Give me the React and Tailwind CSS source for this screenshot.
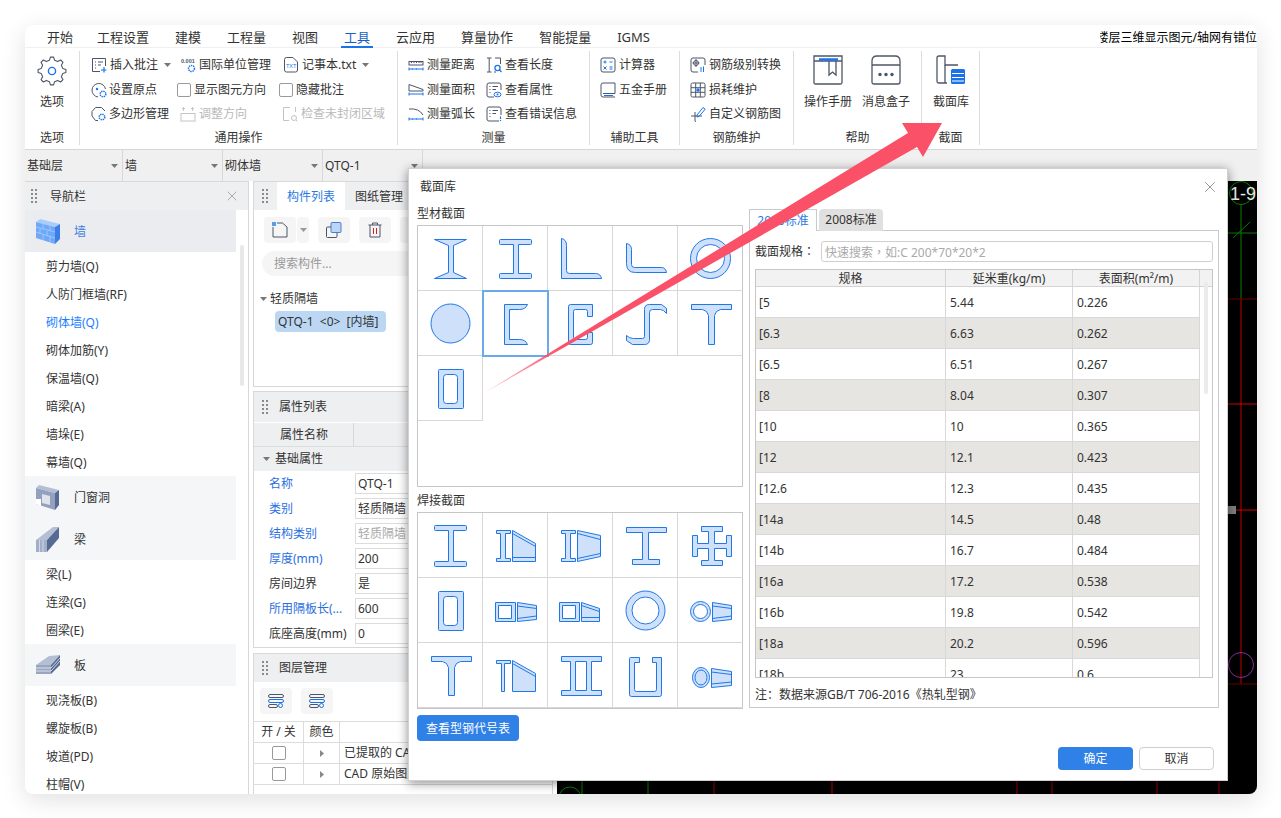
import React from 'react';
import { X } from 'lucide-react';

const GR = '#4d5568';
const BL = '#1a73e8';
const LT = '#c4c4c4';

function Ico({ w = 16, children, className = '' }) {
  return (
    <svg width={w} height={w} viewBox={`0 0 ${w} ${w}`} fill="none" stroke={GR} strokeWidth="1" className={`shrink-0 ${className}`}>
      {children}
    </svg>
  );
}

function Caret({ color = '#777' }) {
  return (
    <svg width="7" height="4" viewBox="0 0 7 4" className="shrink-0"><path d="M0 0H7L3.5 4Z" fill={color} /></svg>
  );
}

function Grip() {
  return (
    <svg width="6" height="14" viewBox="0 0 6 14" className="shrink-0" fill="#8a8a8a">
      <rect x="0" y="0" width="2" height="2" /><rect x="4" y="0" width="2" height="2" />
      <rect x="0" y="4" width="2" height="2" /><rect x="4" y="4" width="2" height="2" />
      <rect x="0" y="8" width="2" height="2" /><rect x="4" y="8" width="2" height="2" />
      <rect x="0" y="12" width="2" height="2" /><rect x="4" y="12" width="2" height="2" />
    </svg>
  );
}

function gearPath(cx, cy, r1, r2, n) {
  const pts = [];
  for (let i = 0; i < n; i++) {
    const a = (i / n) * Math.PI * 2 - Math.PI / 2;
    const s = (Math.PI * 2) / n;
    [[-0.3, r1], [-0.15, r2], [0.15, r2], [0.3, r1]].forEach(([k, r]) => {
      pts.push(`${(cx + Math.cos(a + k * s) * r).toFixed(1)} ${(cy + Math.sin(a + k * s) * r).toFixed(1)}`);
    });
  }
  return 'M' + pts.join('L') + 'Z';
}

const icons = {
  insert: (
    <Ico>
      <path d="M9 14.5H1.5V1.5H14.5V9" /><path d="M4 5H5M7 5H12M4 8H5M7 8H10M4 11H5" />
      <path d="M13 10V15.5M10 13H15.5" stroke={BL} strokeWidth="1.2" />
    </Ico>
  ),
  unit: (
    <Ico>
      <text x="0" y="6" fontSize="5.5" fill={GR} stroke="none" fontFamily="Liberation Sans" fontWeight="bold">0.001</text>
      <circle cx="10.5" cy="11.5" r="3" stroke={BL} strokeDasharray="1.4 .8" strokeWidth="1.5" />
    </Ico>
  ),
  txt: (
    <Ico>
      <path d="M1.5 2.5Q1.5 .5 3.5 .5H10L14.5 5V13Q14.5 15 12.5 15H3.5Q1.5 15 1.5 13Z" />
      <text x="3" y="11" fontSize="5.5" fill={BL} stroke="none" fontFamily="Liberation Sans">TXT</text>
    </Ico>
  ),
  origin: (
    <Ico>
      <path d="M7 15A6.8 6.8 0 1 1 14.5 7" /><circle cx="6" cy="7" r="1.2" fill={BL} stroke="none" />
      <circle cx="12" cy="12" r="2.8" stroke={BL} strokeDasharray="1.4 .8" strokeWidth="1.5" />
    </Ico>
  ),
  poly: (
    <Ico>
      <path d="M7 14.5H4.5L1 10V5.5L4.5 1.5H10.5L14 5" />
      <circle cx="11" cy="11" r="2.8" stroke={BL} strokeDasharray="1.4 .8" strokeWidth="1.5" />
    </Ico>
  ),
  adjust: (
    <Ico>
      <rect x="1" y="7.5" width="14" height="7.5" stroke={LT} /><path d="M3.5 5V1.5M2 3L3.5 1.5L5 3M12.5 5V1.5M11 3L12.5 1.5L14 3" stroke={LT} />
    </Ico>
  ),
  check: (
    <Ico>
      <path d="M8 1.5H1.5V14.5H7M13.5 1V6" stroke={LT} /><circle cx="12" cy="12" r="2.5" stroke={LT} /><path d="M14 14L15.5 15.5" stroke={LT} />
    </Ico>
  ),
  dist: (
    <Ico>
      <rect x="1" y="4.5" width="14" height="3.5" /><path d="M3.5 4.5V6M6 4.5V6M8.5 4.5V6M11 4.5V6M13 4.5V6" />
      <path d="M1 12H15M1 10.5V13.5M15 10.5V13.5M4 12H5M8 12H9" stroke={BL} />
    </Ico>
  ),
  area: (
    <Ico>
      <path d="M1 9V2.5L15 7.5V9Z" /><path d="M1 12H15M1 10.5V13.5M15 10.5V13.5" stroke={BL} />
    </Ico>
  ),
  arc: (
    <Ico>
      <path d="M1 3Q11 2 15 9" /><path d="M1 13H15M1 11.5V14.5M15 11.5V14.5M4 13H5M8 13H9" stroke={BL} />
    </Ico>
  ),
  len: (
    <Ico>
      <path d="M1 1H5.5M3.2 1V15M1 15H5.5M9 1H14.5V7M8 15H10" /><circle cx="11.5" cy="11" r="2.6" stroke={BL} strokeWidth="1.3" /><path d="M13.5 13L15.5 15" stroke={BL} strokeWidth="1.3" />
    </Ico>
  ),
  attr: (
    <Ico>
      <path d="M8 15H3Q1 15 1 13V3Q1 1 3 1H13Q15 1 15 3V8" /><path d="M3.5 4.5H4.5M6.5 4.5H12M3.5 7.5H4.5M6.5 7.5H10M3.5 10.5H4.5" />
      <ellipse cx="11.5" cy="12.5" rx="3.5" ry="2.3" stroke={BL} /><circle cx="11.5" cy="12.5" r="1" fill={BL} stroke="none" />
    </Ico>
  ),
  err: (
    <Ico>
      <path d="M13 15H3Q1 15 1 13V3Q1 1 3 1H13Q15 1 15 3V9" /><path d="M3.5 4.5H4.5M6.5 4.5H12M3.5 7.5H4.5M6.5 7.5H10M3.5 10.5H4.5" />
      <path d="M14.5 10.5V13M14.5 14V15" stroke={BL} strokeWidth="1.2" />
    </Ico>
  ),
  calc: (
    <Ico>
      <rect x="1" y="1" width="14" height="14" rx="2" /><path d="M3.5 5H6.5M5 3.5V6.5M9.5 5H12.5M3.5 9.5L6.5 12.5M6.5 9.5L3.5 12.5M9.5 10H12.5M9.5 12H12.5" stroke={BL} />
    </Ico>
  ),
  book: (
    <Ico>
      <path d="M3 11.5H15V1H3Q1 1 1 3V13Q1 15 3 15H15" /><path d="M4 13.5H13" stroke={BL} />
    </Ico>
  ),
  grade: (
    <Ico>
      <path d="M8 15H3Q1 15 1 13V3Q1 1 3 1H13Q15 1 15 3V8" /><circle cx="6" cy="6" r="2.5" /><path d="M6 2V10M2.5 6H9.5" />
      <path d="M11 10V15M13.5 15V9.5" stroke={BL} />
    </Ico>
  ),
  loss: (
    <Ico>
      <rect x="1" y="1" width="14" height="14" rx="1.5" /><path d="M5.7 1V15M10.3 1V15M1 5.7H15M1 10.3H15" />
      <circle cx="8" cy="8" r="1.7" fill={BL} stroke="none" />
    </Ico>
  ),
  rebar: (
    <Ico>
      <path d="M1 10H12M5 6V15Q5 15.5 6 15.5" /><path d="M7 9L13 1.5L15.2 3.2L9 10.5L7 11Z" stroke={BL} />
    </Ico>
  ),
};

const ribbonText = 'text-xs leading-[16px] text-[#333] whitespace-nowrap';

function Tool({ icon, label, caret, disabled, pl = 0, gap = 3 }) {
  return (
    <div className="flex items-center" style={{ paddingLeft: pl, gap }}>
      {icons[icon]}
      <span className={`${ribbonText} ${disabled ? 'text-[#b9b9b9]' : ''}`}>{label}</span>
      {caret && <span className="ml-[3px]"><Caret /></span>}
    </div>
  );
}

function Chk({ label }) {
  return (
    <div className="flex items-center gap-[3px]">
      <span className="w-[14px] h-[14px] rounded-[2px] border border-[#9a9a9a] bg-white" />
      <span className={ribbonText}>{label}</span>
    </div>
  );
}

function Group({ w, label, children, pl = 0 }) {
  return (
    <div className="flex flex-col shrink-0 relative border-r border-[#dcdcdc] h-[94px] mt-[3px]" style={{ width: w }}>
      <div className="flex-1" style={{ paddingLeft: pl }}>{children}</div>
      <div className="text-xs h-[16px] leading-[20px] text-[#333] text-center mb-[1px]">{label}</div>
    </div>
  );
}

const Rows = ({ children, cols }) => (
  <div className="grid grid-rows-[24.5px_24.5px_24.5px] items-center mt-[2px]" style={{ gridTemplateColumns: cols }}>{children}</div>
);

function BigTool({ label, children }) {
  return (
    <div className="flex flex-col items-center w-[48px]">
      <div className="h-[32px] mt-[3px] flex items-center justify-center">{children}</div>
      <div className={`${ribbonText} mt-[8px]`}>{label}</div>
    </div>
  );
}

function Ribbon() {
  return (
    <div className="flex h-[102px] border-b border-[#d6d6d6] bg-white shrink-0">
      <Group w={55} label="选项">
        <div className="flex flex-col items-center pt-[5px]">
          <svg width="30" height="30" viewBox="0 0 30 30" fill="none">
            <path d={gearPath(15, 15, 11, 14, 8)} stroke={GR} strokeWidth="1.1" strokeLinejoin="round" />
            <circle cx="15" cy="15" r="3.6" stroke={BL} strokeWidth="1.4" />
          </svg>
          <div className={`${ribbonText} mt-[8px]`}>选项</div>
        </div>
      </Group>
      <Group w={318} label="通用操作" pl={11}>
        <Rows cols="86px 102px 1fr">
          <Tool icon="insert" label="插入批注" caret />
          <Tool icon="unit" label="国际单位管理" pl={4} gap={2} />
          <Tool icon="txt" label="记事本.txt" caret pl={4} />
          <Tool icon="origin" label="设置原点" gap={2} />
          <Chk label="显示图元方向" />
          <Chk label="隐藏批注" />
          <Tool icon="poly" label="多边形管理" gap={2} />
          <Tool icon="adjust" label="调整方向" disabled pl={3} />
          <Tool icon="check" label="检查未封闭区域" disabled pl={3} />
        </Rows>
      </Group>
      <Group w={192} label="测量" pl={10}>
        <Rows cols="78px 1fr">
          <Tool icon="dist" label="测量距离" />
          <Tool icon="len" label="查看长度" />
          <Tool icon="area" label="测量面积" />
          <Tool icon="attr" label="查看属性" />
          <Tool icon="arc" label="测量弧长" />
          <Tool icon="err" label="查看错误信息" />
        </Rows>
      </Group>
      <Group w={90} label="辅助工具" pl={10}>
        <Rows cols="1fr">
          <Tool icon="calc" label="计算器" />
          <Tool icon="book" label="五金手册" />
        </Rows>
      </Group>
      <Group w={114} label="钢筋维护" pl={10}>
        <Rows cols="1fr">
          <Tool icon="grade" label="钢筋级别转换" />
          <Tool icon="loss" label="损耗维护" />
          <Tool icon="rebar" label="自定义钢筋图" />
        </Rows>
      </Group>
      <Group w={128} label="帮助" pl={10}>
        <div className="flex gap-[10px]">
          <BigTool label="操作手册">
            <svg width="30" height="30" viewBox="0 0 30 30" fill="none" stroke={GR} strokeWidth="1.3">
              <path d="M1 1H29V27.5Q29 29 27.5 29H2.5Q1 29 1 27.5Z M1 6H29" />
              <path d="M6 4.5H25" stroke={BL} strokeWidth="2.4" />
              <path d="M16 6V20L19.5 17L23 20V6" />
            </svg>
          </BigTool>
          <BigTool label="消息盒子">
            <svg width="30" height="30" viewBox="0 0 30 30" fill="none" stroke={GR} strokeWidth="1.3">
              <path d="M1 6Q1 1 6 1H24Q29 1 29 6V27Q29 29 27 29H3Q1 29 1 27Z M1 10H29" />
              <circle cx="9" cy="19.5" r="1.7" fill={GR} stroke="none" /><circle cx="15" cy="19.5" r="1.7" fill={GR} stroke="none" /><circle cx="21" cy="19.5" r="1.7" fill={GR} stroke="none" />
            </svg>
          </BigTool>
        </div>
      </Group>
      <Group w={58} label="截面" pl={5}>
        <BigTool label="截面库">
          <svg width="30" height="30" viewBox="0 0 30 30" fill="none" stroke={GR} strokeWidth="1.3">
            <path d="M11 28H3Q1 28 1 26V3Q1 1 3 1H9V10H22" /><path d="M9 10V28" />
            <rect x="15" y="14" width="14" height="15" rx="1.5" fill={BL} stroke="none" />
            <path d="M16 18.5H28M16 22.5H28M16 26H28" stroke="#fff" strokeWidth="1.2" />
          </svg>
        </BigTool>
      </Group>
    </div>
  );
}

function NavIcon({ kind }) {
  if (kind === 'wall') {
    return (
      <svg width="24" height="25" viewBox="0 0 24 25">
        <path d="M0 3L4 0L24 5L19 8Z" fill="#a9cdfb" />
        <path d="M0 3L19 8V25L0 19Z" fill="#6fa8f8" />
        <path d="M19 8L24 5V20L19 25Z" fill="#3c7de6" />
        <path d="M0 8L19 13M0 13L19 19M7 5V10M14 7V12M4 10V15M11 12V17M7 15V21M14 17V23" stroke="#a9cdfb" strokeWidth=".8" fill="none" />
      </svg>
    );
  }
  if (kind === 'door') {
    return (
      <svg width="24" height="25" viewBox="0 0 24 25">
        <path d="M0 3L3 0L23 5L19 8Z" fill="#b5bfd4" />
        <path d="M0 3L19 8V25L0 19Z" fill="#93a1bf" />
        <path d="M19 8L23 5V20L19 25Z" fill="#566a93" />
        <path d="M6 9L14 11V20L6 18Z" fill="#dfe3ea" />
        <path d="M0 14H5V21L0 19Z" fill="#fff" />
      </svg>
    );
  }
  if (kind === 'beam') {
    return (
      <svg width="24" height="25" viewBox="0 0 24 25">
        <path d="M0 13L17 0H23L11 13Z" fill="#b5bfd4" />
        <path d="M0 13H11V25H0Z" fill="#a3afc9" />
        <path d="M11 13L23 0V11L11 25Z" fill="#566a93" />
        <path d="M3.5 13V25M7 13V25" stroke="#dfe3ea" strokeWidth=".8" />
      </svg>
    );
  }
  return (
    <svg width="24" height="22" viewBox="0 0 24 22">
      <path d="M0 11L13 2L24 1L15 11Z" fill="#b5bfd4" />
      <path d="M0 11H15V20H0Z" fill="#98a6c2" />
      <path d="M15 11L24 1V11L15 20Z" fill="#566a93" />
      <path d="M0 14H15M0 17H15M15 14L24 4M15 17L24 7" stroke="#eef0f4" strokeWidth=".8" />
    </svg>
  );
}

const navData = [
  ['wall', '墙', ['剪力墙(Q)', '人防门框墙(RF)', '砌体墙(Q)', '砌体加筋(Y)', '保温墙(Q)', '暗梁(A)', '墙垛(E)', '幕墙(Q)'], true],
  ['door', '门窗洞', []],
  ['beam', '梁', ['梁(L)', '连梁(G)', '圈梁(E)']],
  ['slab', '板', ['现浇板(B)', '螺旋板(B)', '坡道(PD)', '柱帽(V)']],
];

function Nav() {
  return (
    <div className="w-[224px] shrink-0 border-r border-[#d8d8d8] border-t flex flex-col relative overflow-hidden">
      <div className="h-[28px] bg-[#eeeff1] flex items-center pl-[6px] pr-[8px] shrink-0">
        <Grip />
        <span className="text-xs text-[#333] ml-[13px] flex-1 pt-[2px]">导航栏</span>
        <X size={16} strokeWidth={1} color="#888" />
      </div>
      <div className="w-[211px]">
        {navData.map(([kind, name, items, active]) => (
          <div key={kind}>
            <div className={`h-[42px] flex items-center pl-[11px] ${active ? 'bg-[#ebecf0]' : 'bg-[#f5f6f8]'}`}>
              <div className="w-[24px] flex justify-center"><NavIcon kind={kind} /></div>
              <span className={`text-xs ml-[14px] pt-[1px] ${active ? 'text-[#3f7fe0]' : 'text-[#333]'}`}>{name}</span>
            </div>
            {items.map((it) => (
              <div key={it} className={`h-[28px] leading-[30px] pl-[21px] text-xs ${it === '砌体墙(Q)' ? 'text-[#1a7fff]' : 'text-[#333]'}`}>{it}</div>
            ))}
          </div>
        ))}
      </div>
      {/* 捲軸 */}
      <div className="absolute left-[215px] top-[63px] w-[4px] h-[141px] rounded bg-[#e8e8e8]" />
    </div>
  );
}

const ToolBtn = ({ children, w = 32 }) => (
  <div className="h-[26px] bg-[#f5f5f5] rounded flex items-center justify-center shrink-0" style={{ width: w }}>{children}</div>
);

const props = [
  ['名称', 'QTQ-1', 1],
  ['类别', '轻质隔墙', 1],
  ['结构类别', '轻质隔墙', 1, 1],
  ['厚度(mm)', '200', 1],
  ['房间边界', '是', 0],
  ['所用隔板长(...', '600', 1],
  ['底座高度(mm)', '0', 0],
];

const layerIcon = (
  <svg width="16" height="14" viewBox="0 0 16 14" fill="none" stroke={GR} strokeWidth="1">
    <rect x=".5" y=".5" width="15" height="3" rx="1.5" /><rect x=".5" y="5.5" width="15" height="3" rx="1.5" stroke={BL} /><rect x=".5" y="10.5" width="9" height="3" rx="1.5" />
    <circle cx="12.5" cy="11.5" r="2" stroke={BL} />
  </svg>
);

function Panels() {
  return (
    <div className="w-[300px] ml-[4px] shrink-0 flex flex-col gap-[4px] text-xs text-[#333]">
      <div className="h-[206px] border border-[#d8d8d8] shrink-0">
        <div className="h-[28px] bg-[#eeeff1] flex items-stretch">
          <div className="w-[23px] flex items-center pl-[8px]"><Grip /></div>
          <div className="w-[68px] bg-white text-[#2a7ae2] flex items-center justify-center pt-[1px]">构件列表</div>
          <div className="w-[68px] flex items-center justify-center pt-[1px]">图纸管理</div>
        </div>
        <div className="flex gap-[9px] pl-[10px] pt-[7px]">
          <div className="flex gap-px">
            <ToolBtn>
              <svg width="16" height="16" viewBox="0 0 16 16" fill="none" stroke={GR}>
                <path d="M5 1H10.5L15 5V15H1V5" /><rect x="0" y="0" width="4" height="4" fill="#5a9bf0" stroke="none" />
              </svg>
            </ToolBtn>
            <ToolBtn w={12}><Caret color="#999" /></ToolBtn>
          </div>
          <ToolBtn>
            <svg width="16" height="16" viewBox="0 0 16 16" fill="none" stroke={GR}>
              <rect x="5" y=".5" width="10" height="10" rx="1" fill="#bcd5f5" stroke="#4a7fcf" /><path d="M5 5H1.5Q.5 5 .5 6V14.5Q.5 15.5 1.5 15.5H10Q11 15.5 11 14.5V11" />
            </svg>
          </ToolBtn>
          <ToolBtn>
            <svg width="14" height="16" viewBox="0 0 14 16" fill="none" stroke={GR}>
              <path d="M.5 3H13.5M4.5 3V1H9.5V3M2 3V15H12V3" /><path d="M5.5 6V12M8.5 6V12" stroke="#d02020" />
            </svg>
          </ToolBtn>
          <ToolBtn />
        </div>
        <div className="h-[25px] mt-[8px] ml-[8px] w-[280px] rounded-full bg-[#f5f5f5] leading-[25px] pl-[12px] text-[#999]">搜索构件...</div>
        <div className="flex items-center h-[16px] mt-[15px] pl-[6px] gap-[3px]">
          <Caret />
          <span>轻质隔墙</span>
        </div>
        <div className="ml-[21px] mt-[4px] w-[111px] h-[21px] rounded bg-[#bcd7f3] leading-[21px] pl-[3px] whitespace-pre">QTQ-1  &lt;0&gt;  [内墙]</div>
      </div>

      <div className="h-[257px] border border-[#d8d8d8] shrink-0">
        <div className="h-[30px] bg-[#eeeff1] flex items-center pl-[8px]">
          <Grip /><span className="ml-[11px]">属性列表</span>
        </div>
        <div className="h-[24px] bg-[#eeeff1] mt-px flex items-center border-b border-[#dcdcdc]">
          <div className="w-[100px] h-full border-r border-[#d8d8d8] leading-[24px] pl-[26px]">属性名称</div>
        </div>
        <div className="h-[24px] bg-[#eeeff1] flex items-center pl-[9px] gap-[5px]"><Caret /><span>基础属性</span></div>
        {props.map(([k, v, blue, dis]) => (
          <div key={k} className="h-[25px] flex items-center">
            <div className={`w-[101px] pl-[15px] whitespace-nowrap ${blue ? 'text-[#2a6fe0]' : ''}`}>{k}</div>
            <div className={`flex-1 h-[21px] border border-[#dcdcdc] leading-[19px] pl-[2px] ${dis ? 'text-[#aaa]' : ''}`}>{v}</div>
          </div>
        ))}
      </div>

      <div className="flex-1 border border-[#d8d8d8] border-b-0 mt-px">
        <div className="h-[28px] bg-[#eeeff1] flex items-center pl-[8px]">
          <Grip /><span className="ml-[11px]">图层管理</span>
        </div>
        <div className="flex gap-[9px] pl-[6px] pt-[6px] pb-[7px]">
          <ToolBtn>{layerIcon}</ToolBtn>
          <ToolBtn>{layerIcon}</ToolBtn>
        </div>
        {[['开 / 关', '颜色', ''], [0, 1, '已提取的 CAD 图层'], [0, 1, 'CAD 原始图层']].map((r, i) => (
          <div key={i} className="h-[21px] flex border-t border-[#dcdcdc] leading-[20px]">
            <div className="w-[50px] border-r border-[#dcdcdc] flex items-center justify-center">
              {i === 0 ? r[0] : <span className="w-[14px] h-[14px] rounded-[2px] border border-[#999]" />}
            </div>
            <div className="w-[36px] border-r border-[#dcdcdc] flex items-center justify-center">
              {i === 0 ? r[1] : <svg width="4" height="7" viewBox="0 0 4 7"><path d="M0 0L4 3.5L0 7Z" fill="#888" /></svg>}
            </div>
            <div className="flex-1 pl-[4px] whitespace-nowrap">{r[2]}</div>
          </div>
        ))}
        <div className="border-t border-[#dcdcdc]" />
      </div>
    </div>
  );
}

function Canvas() {
  const dark = '#6a0000';
  const red = '#c00000';
  return (
    <div className="flex-1 ml-[4px] bg-black">
      <svg width="700" height="613" viewBox="0 0 700 613" className="block">
        <g transform="translate(-557 -181)" fill="none">
          <circle cx="1241" cy="193" r="11.5" stroke="#0a7a0a" />
          <text x="1230" y="200" fontSize="18" fill="#e8e8e8" stroke="none" fontFamily="Liberation Sans">1-9</text>
          <path d="M1241 204V299M1228 233H1257M1233 238L1250 222" stroke="#0a7a0a" />
          <path d="M1241 299V684" stroke={red} />
          <path d="M1228 299H1257M1228 684H1257" stroke={dark} />
          <path d="M1228 404H1257M1228 510H1257" stroke="#d80000" />
          <rect x="1228" y="506" width="8" height="8" fill="#808080" />
          <circle cx="1241" cy="665" r="12.5" stroke="#8a2f9e" />
          <path d="M582 781V794M648 781V794" stroke="#0a7a0a" />
          <path d="M714 781V794M1017 781V794M1052 781V794M1157 781V794M1219 781V794" stroke="#9a0000" />
          <path d="M832 781V794" stroke={red} />
          <circle cx="570" cy="798" r="11" stroke="#0a7a0a" />
        </g>
      </svg>
    </div>
  );
}

const sFill = { fill: '#cfe1fa', stroke: '#1f78e8', strokeWidth: 1, strokeLinejoin: 'round', fillRule: 'evenodd' };
const P = ({ d }) => <path d={d} {...sFill} />;
const L = ({ d }) => <path d={d} fill="none" stroke="#1f78e8" strokeWidth="1" />;
const tube = 'M21 13H44Q45 13 45 14V51Q45 52 44 52H21Q20 52 20 51V14Q20 13 21 13ZM28 18Q25 18 25 21V44Q25 47 28 47H36Q39 47 39 44V21Q39 18 36 18Z';
const ibeam = 'M17 13H47Q48 13 48 14V17Q48 18 47 18H35V47H47Q48 47 48 48V51Q48 52 47 52H17Q16 52 16 51V48Q16 47 17 47H30V18H17Q16 18 16 17V14Q16 13 17 13Z';
const smallI = 'M13 17H27V20H22V45H27V48H13V45H17V20H13Z';
const trapA = (
  <>
    <P d="M29 17L52 30V48H29Z" /><L d="M29 20L52 33" />
  </>
);
const ring = (cx, cy, R, r) => `M${cx - R} ${cy}A${R} ${R} 0 1 1 ${cx + R} ${cy}A${R} ${R} 0 1 1 ${cx - R} ${cy}ZM${cx - r} ${cy}A${r} ${r} 0 1 0 ${cx + r} ${cy}A${r} ${r} 0 1 0 ${cx - r} ${cy}Z`;
const trapB = (x) => (
  <>
    <P d={`M${x} 24L${x + 19} 27V41L${x} 43Z`} /><L d={`M${x} 27.5L${x + 19} 30M${x} 40L${x + 19} 37.5`} />
  </>
);

const profileShapes = [
  <P d="M16 13H48L35 19V46L48 52H16L30 46V19Z" />,
  <P d={ibeam} />,
  <P d="M13 12Q18 13 18 19V44Q18 47 21 47H47Q52 47 53 52H13Z" />,
  <P d="M13 17Q18 18 18 23V38Q18 41 21 41H48Q52 41 53 46H22Q13 46 13 37Z" />,
  <P d={ring(32, 32, 20, 14)} />,
  <circle cx="32" cy="32" r="19.5" {...sFill} />,
  <P d="M21 13H44Q42 18 36 18H26V48H36Q42 48 44 53H21Z" />,
  <P d="M22 13H44V25H39V20Q39 18 37 18H27Q25 18 25 20V46Q25 48 27 48H37Q39 48 39 46V41H44V51Q44 53 42 53H22Q20 53 20 51V15Q20 13 22 13Z" />,
  <P d="M31 18Q31 13 36 13H48L53 17V22Q50 18 47 18H39Q36 18 36 21V48Q36 53 31 53H19L13 49V44Q16 47 20 47H29Q31 47 31 45Z" />,
  <P d="M13 13H53V18H42Q37 19 36 24V53H30V24Q29 19 24 18H13Z" />,
  <P d={tube} />,
];

const weldShapes = [
  <P d="M17 12H47Q48 12 48 13V16Q48 17 47 17H35V48H47Q48 48 48 49V52Q48 53 47 53H17Q16 53 16 52V49Q16 48 17 48H30V17H17Q16 17 16 16V13Q16 12 17 12Z" />,
  <>
    <P d={smallI} />{trapA}<L d="M29 44H52" />
  </>,
  <>
    <P d={smallI} /><P d="M29 17L52 22V43L29 48Z" /><L d="M29 20L52 26M29 45L52 40" />
  </>,
  <P d="M13 14H53V19H35V46H46V51H19V46H29V19H13Z" />,
  <P d="M23 13H44V18H36V30H48V22H53V43H48V35H36V47H44V52H23V47H30V35H19V43H14V22H19V30H30V18H23Z" />,
  <P d={tube} />,
  <>
    <P d="M12 24H32V43H12ZM15 27V40H28V27Z" />{trapB(34)}
  </>,
  <>
    <P d="M11 24H31V43H11ZM14 27V40H27V27Z" /><P d="M33 24L51 30V43H33Z" /><L d="M33 27L51 33M33 39H51" />
  </>,
  <P d={ring(32, 32, 19.5, 13.5)} />,
  <>
    <P d={ring(22, 33, 10, 7)} />{trapB(34)}
  </>,
  <P d="M13 13H53V18H42Q37 19 36 24V52H30V24Q29 19 24 18H13Z" />,
  <>
    <P d="M13 17H27V20H21V48H18V20H13Z" />{trapA}
  </>,
  <P d="M13 13H53V18H43V47H53V52H13V47H22V18H13ZM27 18V47H38V18Z" />,
  <P d="M17 14H26V19H21V46Q21 48 23 48H41Q43 48 43 46V19H39V14H48V51Q48 53 46 53H18Q16 53 16 51V15Q16 14 17 14Z" />,
  <>
    <ellipse cx="22.5" cy="34" rx="8.5" ry="10" {...sFill} /><ellipse cx="22.5" cy="34" rx="6" ry="7.5" {...sFill} />
    <P d="M33 25L53 28V42L33 44Z" /><L d="M33 28.5L53 31M33 40.5L53 38.5" />
  </>,
];

function ShapeGrid({ shapes, selected, h }) {
  return (
    <div className="w-[326px] border border-[#c6c6c6] grid grid-cols-[repeat(5,65px)] auto-rows-[65px] content-start" style={{ height: h }}>
      {shapes.map((s, i) => (
        <div key={i} className={`relative ${selected === i ? 'outline-2 -outline-offset-1 outline-[#6aa9ec] z-[1]' : ''} ${(i + 1) % 5 === 0 ? 'border-b' : 'border-r border-b'} border-[#d8d8d8]`}>
          <svg width="65" height="65" viewBox="0 0 65 65" className="block"><g transform="translate(.5 .5)">{s}</g></svg>
        </div>
      ))}
    </div>
  );
}

const specRows = [
  ['[5', '5.44', '0.226'], ['[6.3', '6.63', '0.262'], ['[6.5', '6.51', '0.267'], ['[8', '8.04', '0.307'],
  ['[10', '10', '0.365'], ['[12', '12.1', '0.423'], ['[12.6', '12.3', '0.435'], ['[14a', '14.5', '0.48'],
  ['[14b', '16.7', '0.484'], ['[16a', '17.2', '0.538'], ['[16b', '19.8', '0.542'], ['[18a', '20.2', '0.596'], ['[18b', '23', '0.6'],
];

function SpecTable() {
  return (
    <div className="relative mt-[7px] w-[458px] h-[409px] border border-[#c6c6c6] overflow-hidden">
      <div className="flex h-[17px] bg-[#f2f2f2] border-b border-[#d4d4d4] leading-[17px] text-center">
        <div className="w-[190px] border-r border-[#d4d4d4]">规格</div>
        <div className="w-[127px] border-r border-[#d4d4d4]">延米重(kg/m)</div>
        <div className="w-[127px] border-r border-[#d4d4d4]">表面积(m²/m)</div>
      </div>
      {specRows.map((r, i) => (
        <div key={r[0]} className="flex h-[31px] leading-[31px]">
          <div className={`w-[444px] flex border-b border-[#d8d8d8] border-r ${i % 2 ? 'bg-[#e6e5e1]' : 'bg-white'}`}>
            <div className="w-[190px] border-r border-[#d8d8d8] pl-[3px]">{r[0]}</div>
            <div className="w-[127px] border-r border-[#d8d8d8] pl-[4px]">{r[1]}</div>
            <div className="pl-[4px]">{r[2]}</div>
          </div>
        </div>
      ))}
      <div className="absolute left-[448px] top-[12px] w-[4px] h-[112px] rounded bg-[#ebebeb]" />
    </div>
  );
}

const tcPunct = "font-['Noto_Sans_CJK_TC']";

function Dialog() {
  return (
    <div className="absolute left-[383px] top-[143px] w-[820px] h-[613px] bg-white border border-[#d0d0d0] shadow-[0_2px_10px_rgba(0,0,0,0.45)] z-10 flex flex-col text-xs text-[#333]">
      <div className="h-[36px] shrink-0 flex items-center justify-between pl-[11px] pr-[8px]">
        <span>截面库</span>
        <X size={18} strokeWidth={1} color="#777" />
      </div>
      <div className="flex pl-[8px] gap-[6px]">
        <div className="w-[326px] shrink-0">
          <div className="h-[16px] leading-[18px] mb-[4px]">型材截面</div>
          <ShapeGrid shapes={profileShapes} selected={6} h={262} />
          <div className="h-[16px] leading-[18px] mt-[5px] mb-[4px]">焊接截面</div>
          <ShapeGrid shapes={weldShapes} h={197} />
          <button className="mt-[6px] w-[102px] h-[26px] pt-px rounded bg-[#2f80e7] text-white text-xs">查看型钢代号表</button>
        </div>
        <div className="w-[470px] shrink-0 pt-[4px]">
          <div className="flex h-[22px] gap-[2px] relative z-[1]">
            <div className="w-[68px] h-[22px] border border-b-0 border-[#c8cad0] bg-white text-[#2a7ae2] text-center leading-[21px]">2016标准</div>
            <div className="w-[64px] h-[22px] bg-[#e0e0e0] rounded-t text-center leading-[22px]">2008标准</div>
          </div>
          <div className="-mt-px h-[478px] border border-[#c8cad0] pl-[5px] pt-[10px]">
            <div className="flex items-center">
              <span className="w-[66px] shrink-0">截面规格<span className={tcPunct}>：</span></span>
              <div className="w-[392px] h-[21px] border border-[#cfcfcf] rounded-[3px] leading-[19px] pl-[3px] text-[#aaa]">快速搜索<span className={tcPunct}>，</span>如:C 200*70*20*2</div>
            </div>
            <SpecTable />
            <div className="mt-[9px] leading-[16px]">注：数据来源GB/T 706-2016《热轧型钢》</div>
          </div>
        </div>
      </div>
      <div className="flex justify-end gap-[6px] pr-[13px] mt-[6px]">
        <button className="w-[75px] h-[23px] pt-px rounded bg-[#2f80e7] text-white text-xs">确定</button>
        <button className="w-[75px] h-[23px] pt-px rounded border border-[#cfcfcf] bg-white text-[#333] text-xs">取消</button>
      </div>
    </div>
  );
}

const tabs = ['开始', '工程设置', '建模', '工程量', '视图', '工具', '云应用', '算量协作', '智能提量', 'IGMS'];

export default function App() {
  return (
    <div className="min-h-screen bg-white pt-[25px] pl-[25px] font-['Noto_Sans','Noto_Sans_CJK_SC',sans-serif]">
      <div className="relative w-[1232px] h-[769px] rounded-lg bg-white shadow-[0_6px_24px_rgba(0,0,0,0.12)] overflow-hidden flex flex-col">
        <div className="h-[23px] flex items-start pl-[22px] gap-[26px] border-b border-[#f0f0f0] shrink-0">
          {tabs.map((t) => (
            <div key={t} className={`relative text-[13px] leading-[24px] whitespace-nowrap ${t === '开始' ? '-mr-[2px]' : ''} ${t === '工具' ? 'text-[#1a5fc4]' : 'text-[#333]'}`}>
              {t}
              {t === '工具' && <div className="absolute -left-[3px] -right-[3px] top-[21px] h-[2px] bg-[#1a73e8]" />}
            </div>
          ))}
          <div className="ml-auto w-[157px] overflow-hidden flex justify-end text-xs leading-[26px] text-black whitespace-nowrap">楼层三维显示图元/轴网有错位</div>
        </div>
        <Ribbon />
        <div className="h-[31px] bg-[#f0f0f0] flex shrink-0 text-xs text-[#333]">
          {[['基础层', 98], ['墙', 100], ['砌体墙', 100], ['QTQ-1', 100]].map(([t, w]) => (
            <div key={t} className="flex items-center justify-between pl-[2px] pr-[4px] border-r border-[#d8d8d8]" style={{ width: w }}>
              <span>{t}</span><Caret />
            </div>
          ))}
        </div>
        <div className="flex flex-1 min-h-0">
          <Nav />
          <Panels />
          <Canvas />
        </div>
        <Dialog />
        {/* 紅色箭頭 */}
        <svg width="1232" height="769" className="absolute left-0 top-0 z-20 pointer-events-none">
          <defs>
            <linearGradient id="arrowFade" x1="484" y1="393" x2="560" y2="345" gradientUnits="userSpaceOnUse">
              <stop offset="0" stopColor="#fb5168" stopOpacity="0.3" />
              <stop offset="1" stopColor="#fb5168" />
            </linearGradient>
          </defs>
          <g transform="translate(-25 -25)">
            <path d="M484 393L908 133L902 123H942L923 157L917 147Z" fill="url(#arrowFade)" />
          </g>
        </svg>
      </div>
    </div>
  );
}
